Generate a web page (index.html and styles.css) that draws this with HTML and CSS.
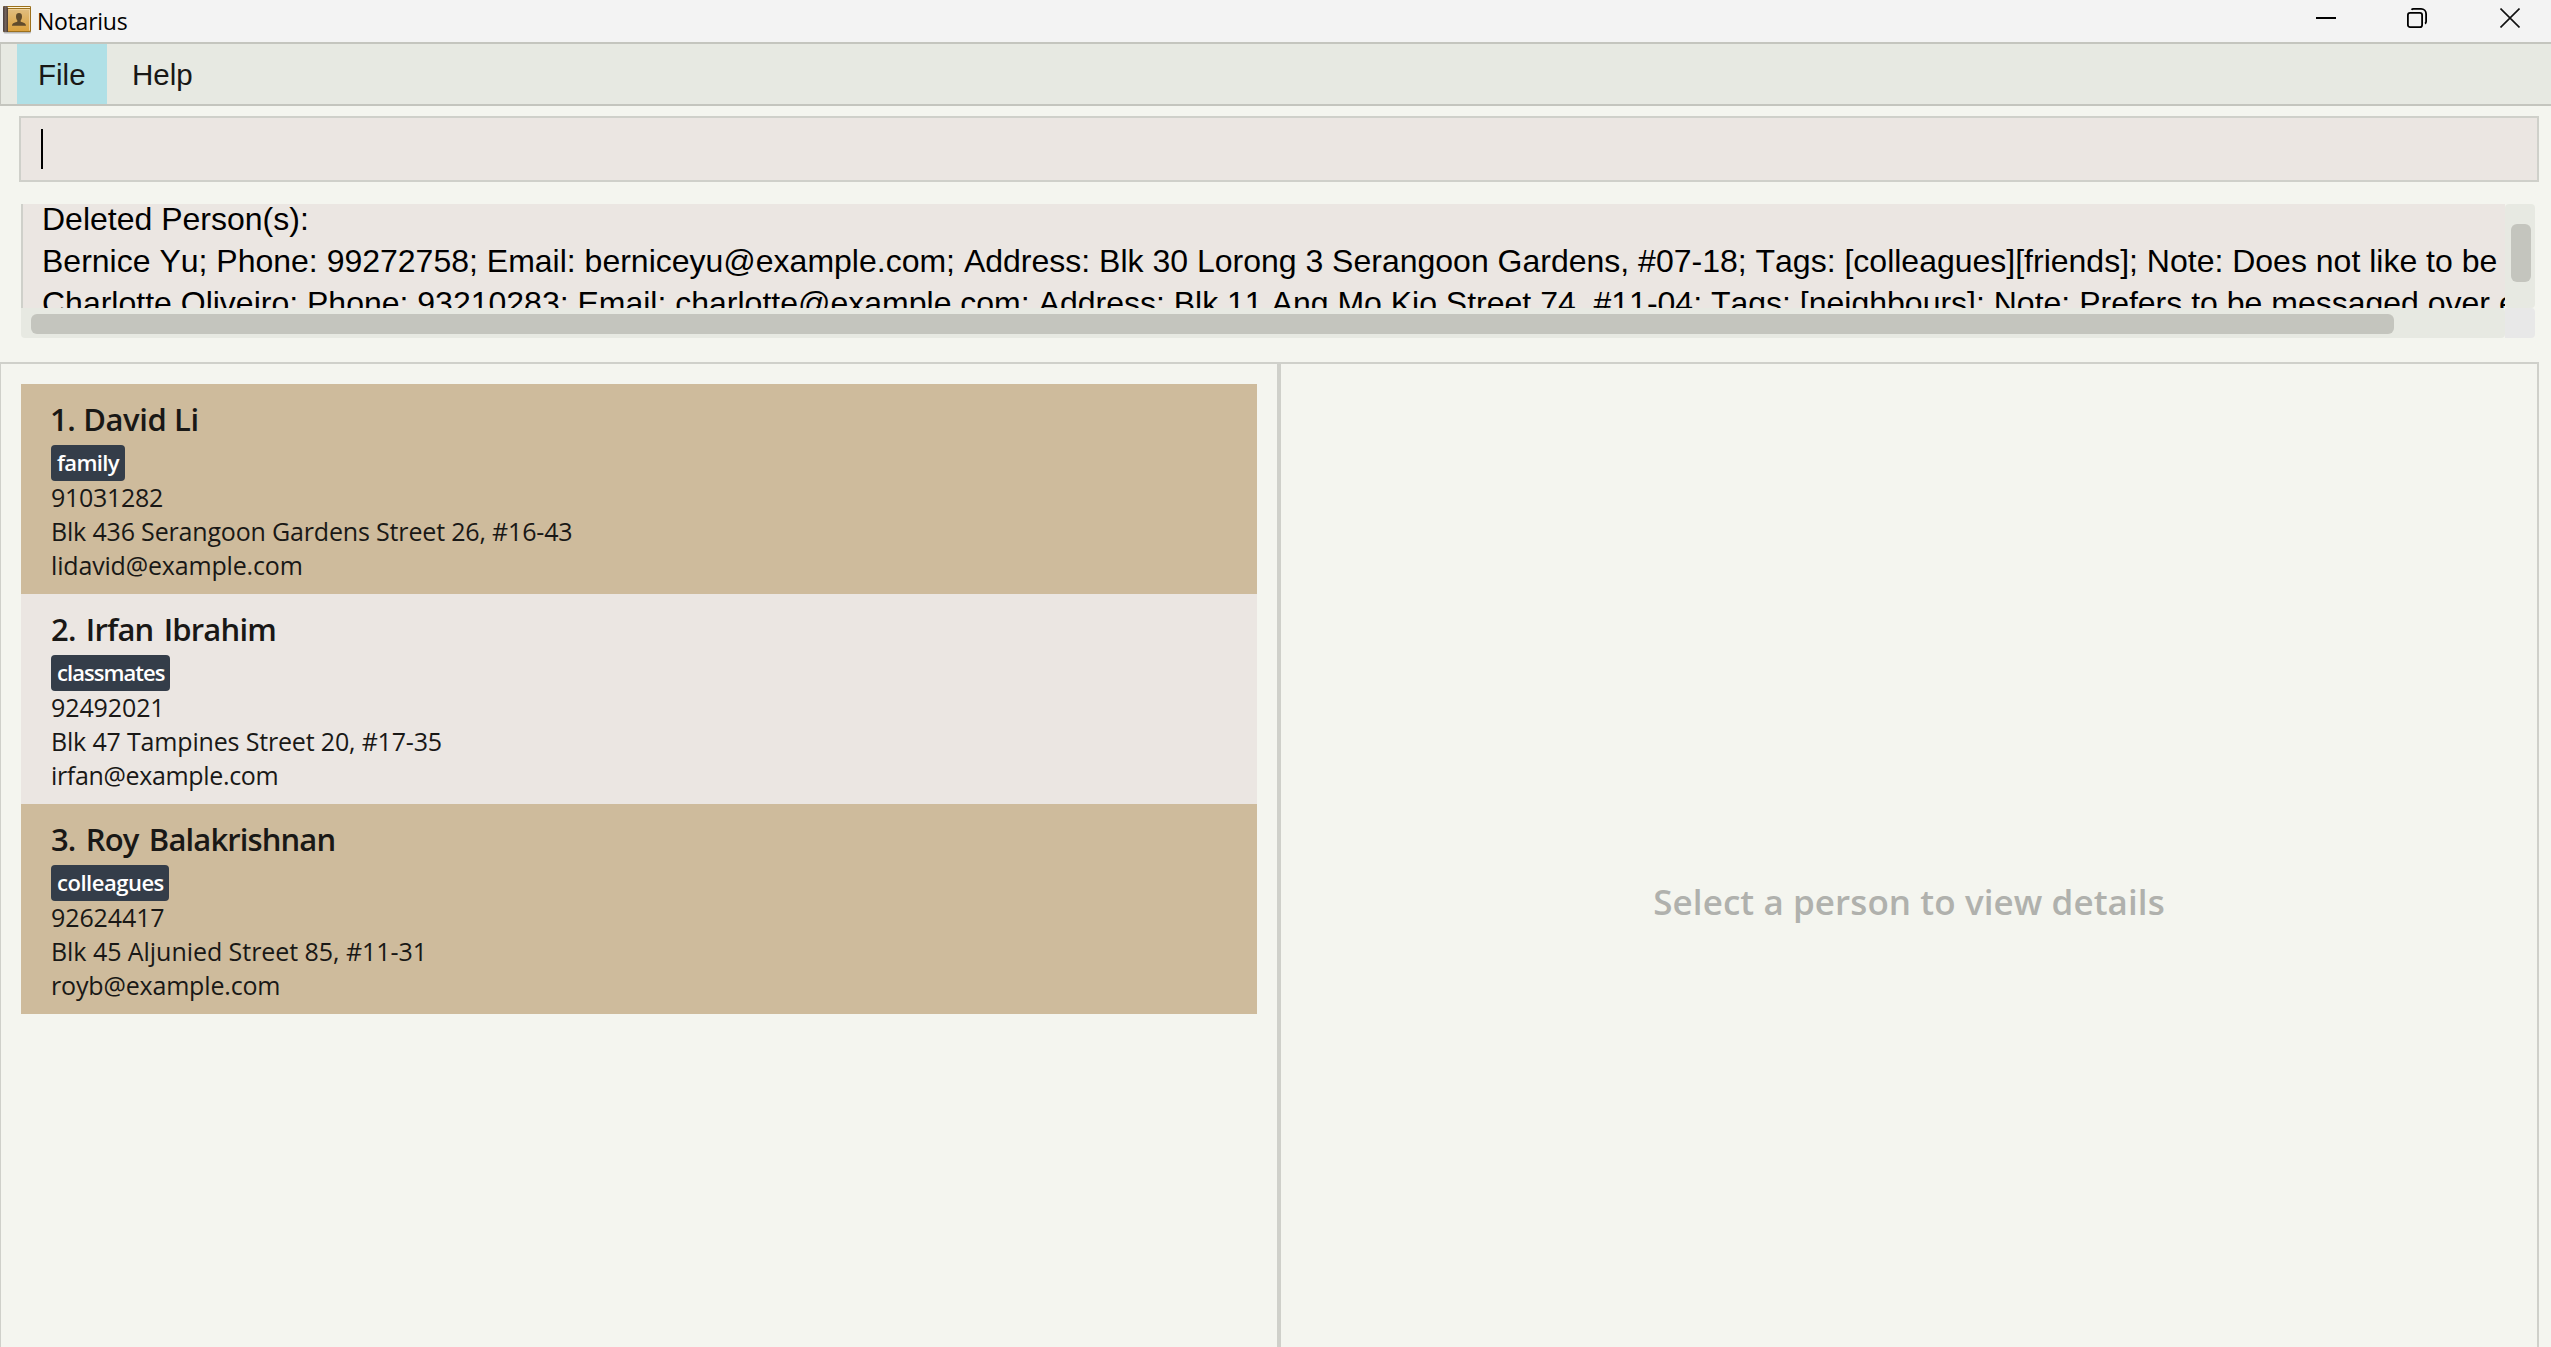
FILE: index.html
```html
<!DOCTYPE html>
<html lang="en">
<head>
<meta charset="utf-8">
<title>Notarius</title>
<link rel="stylesheet" href="styles.css">
</head>
<body>
<div class="window">
  <header class="titlebar">
    <svg class="app-icon" width="28" height="28" viewBox="0 0 28 28">
      <defs>
        <linearGradient id="cover" x1="0" y1="0" x2="0" y2="1">
          <stop offset="0" stop-color="#e0bd80"/>
          <stop offset="1" stop-color="#dba13c"/>
        </linearGradient>
        <linearGradient id="spine" x1="0" y1="0" x2="1" y2="0">
          <stop offset="0" stop-color="#4a3f3c"/>
          <stop offset=".55" stop-color="#75655f"/>
          <stop offset="1" stop-color="#4a3a2c"/>
        </linearGradient>
      </defs>
      <rect x="0.5" y="2" width="27.5" height="25.5" rx="1.5" fill="#000" opacity=".25"/>
      <rect x="0" y="0" width="28" height="26" rx="1" fill="#9c701c"/>
      <rect x="4" y="1" width="23" height="1" fill="#fff6da"/>
      <rect x="5" y="3" width="22" height="22" fill="url(#cover)"/>
      <path d="M5.500 3.500H26.500V24.500" fill="none" stroke="#edcf98"/>
      <path d="M0 1.500L1 0H4L5 2V26H1L0 25Z" fill="url(#spine)"/>
      <path d="M13 10.500C13 7.800 14.200 7 16 7S19 7.800 19 10.500C19 12.500 18.300 13.600 17.700 14.300V15.800C19.500 16.600 23 16.700 23 19.800H9C9 16.700 12.500 16.600 14.300 15.800V14.300C13.700 13.600 13 12.500 13 10.500Z" fill="#604b2c"/>
    </svg>
    <span class="app-title">Notarius</span>
    <div class="window-controls">
      <svg width="20" height="20" viewBox="0 0 20 20"><path d="M0 10H20" stroke="#000" stroke-width="2"/></svg>
      <svg width="20" height="20" viewBox="0 0 20 20" fill="none" stroke="#000" stroke-width="1.800">
        <rect x=".9" y="4.900" width="14.200" height="14.200" rx="2.200"/>
        <path d="M4.500 1.800C5 1.100 5.500 .9 6.500 .9H14C17 .9 19.100 3 19.100 6V13.500C19.100 14.500 18.900 15.100 18 15.600"/>
      </svg>
      <svg width="20" height="20" viewBox="0 0 20 20"><path d="M.5 .5L19.500 19.500M19.500 .5L.5 19.500" stroke="#111" stroke-width="1.600"/></svg>
    </div>
  </header>

  <nav class="menubar">
    <span class="menu menu-active">File</span>
    <span class="menu">Help</span>
  </nav>

  <div class="command"><span class="caret"></span></div>

  <section class="result">
    <div class="result-text"><p>Deleted Person(s):</p><p>Bernice Yu; Phone: 99272758; Email: berniceyu@example.com; Address: Blk 30 Lorong 3 Serangoon Gardens, #07-18; Tags: [colleagues][friends]; Note: Does not like to be</p><p>Charlotte Oliveiro; Phone: 93210283; Email: charlotte@example.com; Address: Blk 11 Ang Mo Kio Street 74, #11-04; Tags: [neighbours]; Note: Prefers to be messaged over email</p></div>
    <div class="track track-v"><div class="thumb thumb-v"></div></div>
    <div class="track track-h"><div class="thumb thumb-h"></div></div>
    <div class="corner"></div>
  </section>

  <main class="split">
    <div class="list-pane">
      <article class="card">
        <h2 class="name name-david">1. David Li</h2>
        <span class="tag">family</span>
        <p class="phone phone-david">91031282</p>
        <p>Blk 436 Serangoon Gardens Street 26, #16-43</p>
        <p>lidavid@example.com</p>
      </article>
      <article class="card card-even">
        <h2 class="name name-irfan">2. Irfan Ibrahim</h2>
        <span class="tag tag-classmates">classmates</span>
        <p class="phone">92492021</p>
        <p>Blk 47 Tampines Street 20, #17-35</p>
        <p class="email-irfan">irfan@example.com</p>
      </article>
      <article class="card">
        <h2 class="name name-roy">3. Roy Balakrishnan</h2>
        <span class="tag tag-colleagues">colleagues</span>
        <p class="phone">92624417</p>
        <p class="address-roy">Blk 45 Aljunied Street 85, #11-31</p>
        <p>royb@example.com</p>
      </article>
    </div>
    <div class="divider"></div>
    <div class="detail-pane"><p class="placeholder">Select a person to view details</p></div>
  </main>
</div>
</body>
</html>
```
FILE: styles.css
```css
* {
  box-sizing: border-box;
  margin: 0;
}

body {
  background: #f4f5ef;
  font-family: "Open Sans", "Noto Sans", sans-serif;
  color: #191816;
}

.window {
  display: flex;
  flex-direction: column;
  height: 1347px;
  overflow: hidden;
}

.titlebar {
  display: flex;
  flex: none;
  height: 42px;
  padding: 6px 31px 0 3px;
  background: #f3f3f3;
}

.app-icon {
  flex: none;
}

.app-title {
  margin: -1px 0 0 6px;
  font-size: 23px;
  line-height: 32px;
  letter-spacing: -0.25px;
  color: #000;
}

.window-controls {
  display: flex;
  gap: 72px;
  margin: 2px 0 0 auto;
}

.window-controls svg:nth-child(2) {
  margin-right: 1px;
  margin-left: -1px;
}

.menubar {
  display: flex;
  flex: none;
  height: 64px;
  padding-left: 16px;
  background: #e7e9e2;
  border: 2px solid #c4c5be;
  border-width: 2px 0 2px 1px;
}

.menu {
  padding-left: 21px;
  font: 29.5px/62px "Liberation Sans", Arial, sans-serif;
}

.menu + .menu {
  padding-left: 25px;
}

.menu-active {
  width: 90px;
  background: #b0e0e6;
}

.command {
  flex: none;
  height: 66px;
  margin: 10px 12px 0 19px;
  padding: 11px 20px;
  background: #ebe6e2;
  border: 2px solid #cfd0ca;
}

.caret {
  display: block;
  width: 2px;
  height: 40px;
  background: #000;
}

.result {
  display: grid;
  flex: none;
  grid-template-columns: 2484px 30px;
  grid-template-rows: 104px 30px;
  margin: 22px 16px 24px 21px;
}

.result-text {
  overflow: hidden;
  padding-left: 19px;
  background: #ebe6e2;
  border-left: 2px solid #cfd0ca;
  font: 32px/42px "Liberation Sans", Arial, sans-serif;
  font-kerning: none;
  white-space: nowrap;
  color: #000;
}

.result-text p:first-child {
  margin-top: -6px;
}

.track {
  background: #e7e9e2;
  border-radius: 4px;
}

.track-v {
  padding: 20px 4px 0 6px;
}

.track-h {
  padding: 6px 0 0 10px;
  border-top-left-radius: 0;
}

.thumb {
  height: 20px;
  background: #c4c5be;
  border-radius: 6px;
}

.thumb-v {
  height: 58px;
}

.thumb-h {
  width: 2363px;
}

.corner {
  background: #e8e8e8;
  border-radius: 0 4px 4px 0;
}

.split {
  display: grid;
  flex: 1;
  grid-template-columns: 1276px 4px 1fr;
  margin-right: 12px;
  border: 2px solid #cfd0ca;
  border-width: 2px 2px 0 1px;
}

.list-pane {
  padding: 20px 20px 0;
}

.divider {
  background: #cfd0ca;
}

.card {
  height: 210px;
  padding: 14px 30px 0;
  background: #cebb9c;
  font-size: 25px;
  line-height: 34px;
  letter-spacing: -0.17px;
}

.card-even {
  background: #ebe6e2;
}

.name {
  margin-bottom: 5px;
  font-size: 31px;
  font-weight: 600;
  line-height: 42px;
}

.name-david {
  margin-left: -1px;
  letter-spacing: -0.38px;
}

.name-irfan {
  letter-spacing: -0.82px;
  word-spacing: 3px;
}

.name-roy {
  letter-spacing: -0.88px;
  word-spacing: 3.2px;
}

.tag {
  display: block;
  width: 74px;
  height: 36px;
  margin-bottom: -1px;
  padding-left: 6px;
  background: #343d49;
  border-radius: 4px;
  font-size: 22px;
  font-weight: 550;
  line-height: 35px;
  letter-spacing: -0.65px;
  color: #fff;
}

.tag-classmates {
  width: 119px;
  letter-spacing: -0.95px;
}

.tag-colleagues {
  width: 118px;
  letter-spacing: -0.48px;
}

.phone {
  letter-spacing: -0.1px;
}

.phone-david {
  letter-spacing: -0.3px;
}

.email-irfan {
  letter-spacing: -0.34px;
}

.address-roy {
  letter-spacing: -0.05px;
}

.detail-pane {
  padding-top: 513px;
  text-align: center;
}

.placeholder {
  font-size: 35px;
  font-weight: 600;
  line-height: 50px;
  letter-spacing: 0.08px;
  color: #b0b1ad;
}
```
